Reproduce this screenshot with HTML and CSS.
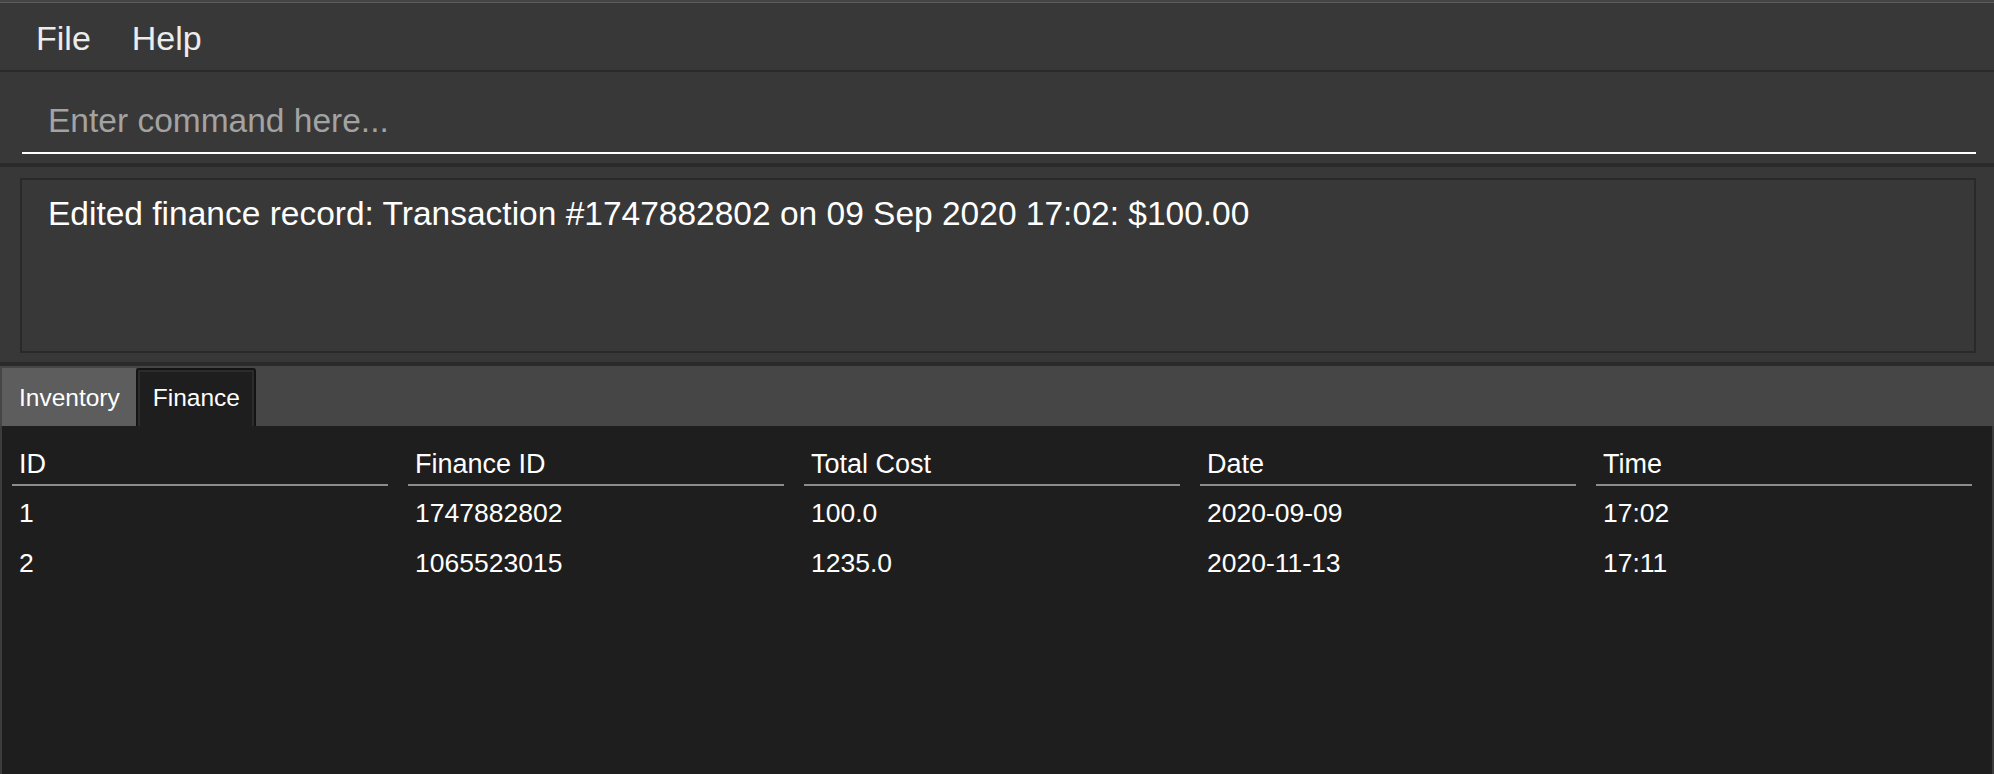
FILE: index.html
```html
<!DOCTYPE html>
<html lang="en">
<head>
<meta charset="utf-8">
<title>Inventory Manager</title>
<link rel="stylesheet" href="styles.css">
</head>
<body>
<div class="app">
  <div class="topline"></div>
  <nav class="menubar">
    <span class="menu-item">File</span>
    <span class="menu-item">Help</span>
  </nav>
  <section class="command">
    <input class="command-field" type="text" placeholder="Enter command here...">
  </section>
  <section class="result">
    <div class="result-box">Edited finance record: Transaction #1747882802 on 09 Sep 2020 17:02: $100.00</div>
  </section>
  <section class="tabpane">
    <div class="tabs">
      <div class="tab">Inventory</div>
      <div class="tab tab-active">Finance</div>
    </div>
    <div class="tab-content">
      <div class="table">
        <div class="th">ID</div>
        <div class="th">Finance ID</div>
        <div class="th">Total Cost</div>
        <div class="th">Date</div>
        <div class="th">Time</div>

        <div class="td">1</div>
        <div class="td">1747882802</div>
        <div class="td">100.0</div>
        <div class="td">2020-09-09</div>
        <div class="td">17:02</div>

        <div class="td">2</div>
        <div class="td">1065523015</div>
        <div class="td">1235.0</div>
        <div class="td">2020-11-13</div>
        <div class="td">17:11</div>
      </div>
    </div>
  </section>
</div>
</body>
</html>
```
FILE: styles.css
```css
* {
  box-sizing: border-box;
}

html, body {
  margin: 0;
  padding: 0;
  height: 100%;
  background: #383838;
  overflow: hidden;
}

body {
  font-family: "Liberation Sans", Arial, sans-serif;
  color: #ffffff;
}

.app {
  display: flex;
  flex-direction: column;
  height: 774px;
}

.topline {
  height: 3px;
  background: #5c5c5c;
  border-top: 2px solid #444444;
  flex: none;
}

.menubar {
  flex: none;
  height: 69px;
  display: flex;
  gap: 41px;
  padding: 3px 0 0 36px;
  background: #383838;
  border-bottom: 2px solid #2a2a2a;
}

.menu-item {
  font-size: 34px;
  line-height: 64px;
  color: #ececec;
}

.command {
  flex: none;
  height: 95px;
  padding: 26px 18px 0 22px;
  background: #383838;
  border-bottom: 4px solid #2a2a2a;
}

.command-field {
  display: block;
  width: 100%;
  height: 56px;
  margin: 0;
  padding: 3px 0 11px 26px;
  border: 0;
  border-bottom: 2px solid #ffffff;
  background: transparent;
  font-family: "Liberation Sans", Arial, sans-serif;
  font-size: 33.5px;
  line-height: 40px;
  color: #ffffff;
  outline: none;
}

.command-field::placeholder {
  color: #a3a3a3;
}

.result {
  flex: none;
  height: 199px;
  padding: 11px 18px 9px 20px;
  background: #383838;
  border-bottom: 4px solid #2a2a2a;
}

.result-box {
  height: 175px;
  border: 2px solid #292929;
  padding: 14px 0 0 26px;
  font-size: 33.5px;
  line-height: 40px;
  color: #ffffff;
}

.tabpane {
  flex: 1;
  display: flex;
  flex-direction: column;
  background: #3c3c3c;
}

.tabs {
  flex: none;
  height: 60px;
  display: flex;
  padding: 2px 0 0 2px;
  background: #464646;
}

.tab {
  height: 58px;
  padding: 2px 16px 0 17px;
  font-size: 24.5px;
  line-height: 56px;
  background: #5d5d5d;
  color: #ffffff;
}

.tab-active {
  background: #1e1e1e;
  border: 2px solid #141414;
  border-bottom: 0;
  box-shadow: inset 2px 2px 0 #2c2c2c, inset -2px 0 0 #2c2c2c;
  border-radius: 3px 3px 0 0;
  padding: 0 14px 0 15px;
}

.tab-content {
  flex: 1;
  margin: 0 2px;
  background: #1e1e1e;
  padding: 19.6px 0 0 10px;
}

.table {
  display: grid;
  grid-template-columns: repeat(5, 376px);
  column-gap: 20px;
  grid-auto-rows: auto;
}

.th {
  font-size: 27px;
  line-height: 36px;
  padding: 0 0 2.4px 7px;
  border-bottom: 2px solid #8c8c8c;
  margin-bottom: 1.6px;
  color: #ffffff;
}

.td {
  font-size: 26.5px;
  line-height: 50px;
  padding-left: 7px;
  color: #ffffff;
}
```
